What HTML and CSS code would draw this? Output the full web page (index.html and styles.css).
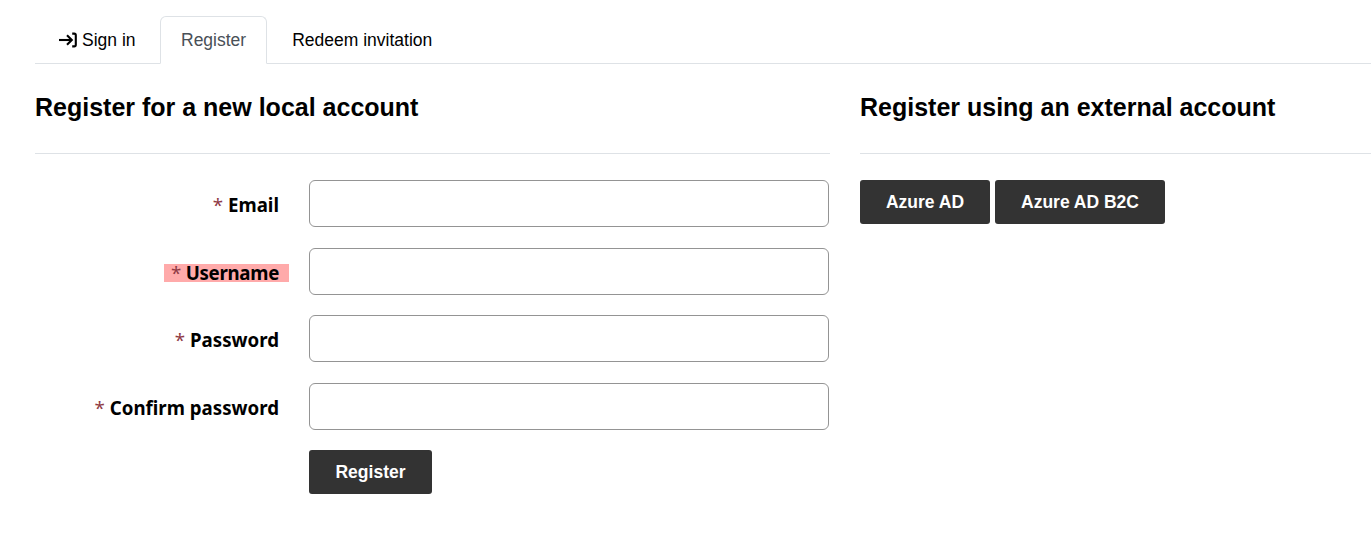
FILE: index.html
```html
<!DOCTYPE html>
<html lang="en">
<head>
    <meta charset="UTF-8">
    <meta name="viewport" content="width=device-width, initial-scale=1.0">
    <title>Register</title>
    <link rel="stylesheet" href="styles.css">
</head>
<body>
    <div class="page">
        <ul class="tabs">
            <li class="tab">
                <svg class="tab-icon" viewBox="0 0 18 16" width="18" height="16" fill="none" stroke="currentColor" stroke-width="2.1">
                    <path d="M0 8h12.5"/>
                    <path d="M8 3.2 12.8 8 8 12.8"/>
                    <path d="M13.2 1.6h2c1 0 1.6.6 1.6 1.6v9.6c0 1-.6 1.6-1.6 1.6h-2"/>
                </svg>
                Sign in
            </li>
            <li class="tab tab-active">Register</li>
            <li class="tab">Redeem invitation</li>
        </ul>

        <div class="columns">
            <section class="col-local">
                <h2>Register for a new local account</h2>
                <hr>
                <form class="form">
                    <div class="form-row">
                        <div class="label-cell"><label><span class="req">*</span> Email</label></div>
                        <input type="text" class="field">
                    </div>
                    <div class="form-row">
                        <div class="label-cell"><label class="highlight"><span class="req">*</span> Username</label></div>
                        <input type="text" class="field">
                    </div>
                    <div class="form-row">
                        <div class="label-cell"><label><span class="req">*</span> Password</label></div>
                        <input type="password" class="field">
                    </div>
                    <div class="form-row">
                        <div class="label-cell"><label><span class="req">*</span> Confirm password</label></div>
                        <input type="password" class="field">
                    </div>
                    <div class="form-row">
                        <div class="label-cell"></div>
                        <button type="button" class="btn btn-register">Register</button>
                    </div>
                </form>
            </section>

            <section class="col-external">
                <h2>Register using an external account</h2>
                <hr>
                <div class="external-buttons">
                    <button type="button" class="btn btn-azure">Azure AD</button>
                    <button type="button" class="btn btn-b2c">Azure AD B2C</button>
                </div>
            </section>
        </div>
    </div>
</body>
</html>
```

FILE: styles.css
```css
html, body {
    margin: 0;
    height: 100%;
    overflow: hidden;
    background-color: #ffffff;
}

body {
    font-family: "Liberation Sans", Arial, sans-serif;
    font-size: 17.5px;
    color: #000;
}

.page {
    width: 1371px;
    padding: 16px 0 0 35px;
    box-sizing: border-box;
    overflow: hidden;
}

.tabs {
    display: flex;
    list-style: none;
    margin: 0;
    padding: 0;
    height: 48px;
    box-sizing: border-box;
    border-bottom: 1px solid #dee2e6;
}

.tab {
    display: flex;
    align-items: center;
    height: 48px;
    padding: 2px 20px 0;
    box-sizing: border-box;
    border: 1px solid transparent;
    border-radius: 6px 6px 0 0;
    line-height: 1;
}

.tab:first-child {
    width: 125px;
    padding-left: 23px;
}

.tab:last-child {
    padding-left: 24px;
}

.tab-icon {
    margin: -2px 5px 0 0;
}

.tab-active {
    color: #495057;
    background-color: #fff;
    border-color: #dee2e6 #dee2e6 #fff;
}

.columns {
    display: flex;
    gap: 30px;
}

.col-local {
    width: 795px;
    flex: none;
}

.col-external {
    width: 640px;
    flex: none;
}

h2 {
    margin: 0;
    padding-top: 29px;
    font-size: 25px;
    line-height: 29px;
    font-weight: 700;
}

hr {
    margin: 31px 0 26px;
    border: 0;
    border-top: 1px solid #dee2e6;
}

.form {
    display: flex;
    flex-direction: column;
    gap: 20.5px;
}

.form-row {
    display: flex;
    align-items: center;
}

.label-cell {
    width: 254px;
    flex: none;
    text-align: right;
    font-family: "Noto Sans", "Open Sans", sans-serif;
    font-weight: 700;
    font-size: 18.7px;
    line-height: 18px;
    padding-top: 3px;
}

.label-cell label {
    display: inline-block;
    padding: 0 10px 0 7px;
}

.label-cell .highlight {
    background-color: #ffaaaa;
    letter-spacing: -0.3px;
}

.req {
    color: #8f3a45;
    font-weight: 400;
}

.field {
    width: 520px;
    height: 47px;
    margin-left: 20px;
    padding: 6px 12px;
    box-sizing: border-box;
    border: 1px solid #949494;
    border-radius: 6px;
    background-color: #fff;
}

.btn {
    height: 44px;
    border: 0;
    border-radius: 3px;
    background-color: #333333;
    color: #fff;
    font-family: "Liberation Sans", Arial, sans-serif;
    font-weight: 700;
    font-size: 17.5px;
    padding: 0;
}

.btn-register {
    width: 123px;
    margin-left: 20px;
}

.external-buttons {
    display: flex;
    gap: 5px;
}

.btn-azure {
    width: 130px;
}

.btn-b2c {
    width: 170px;
}
```
